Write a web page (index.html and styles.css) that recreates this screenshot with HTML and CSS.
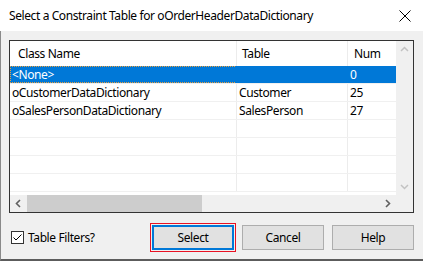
FILE: index.html
```html
<!DOCTYPE html>
<html lang="en">
<head>
  <meta charset="UTF-8">
  <title>Select a Constraint Table</title>
  <link rel="stylesheet" href="styles.css">
</head>
<body>
  <div class="dialog">
    <div class="titlebar">
      <span class="title">Select a Constraint Table for oOrderHeaderDataDictionary</span>
      <svg class="close" width="12" height="12" viewBox="0 0 12 12">
        <path d="M0.5 0.5 L11.5 11.5 M11.5 0.5 L0.5 11.5" stroke="#000" stroke-width="1" fill="none"/>
      </svg>
    </div>

    <div class="client">
      <div class="listview">
        <div class="list-main">
          <div class="list-body">
            <div class="row header">
              <div class="cell col-name">Class Name</div>
              <div class="cell col-table">Table</div>
              <div class="cell col-num">Num</div>
            </div>
            <div class="row selected">
              <div class="cell col-name"><span class="focus">&lt;None&gt;</span></div>
              <div class="cell col-table"></div>
              <div class="cell col-num">0</div>
            </div>
            <div class="row">
              <div class="cell col-name">oCustomerDataDictionary</div>
              <div class="cell col-table">Customer</div>
              <div class="cell col-num">25</div>
            </div>
            <div class="row">
              <div class="cell col-name">oSalesPersonDataDictionary</div>
              <div class="cell col-table">SalesPerson</div>
              <div class="cell col-num">27</div>
            </div>
            <div class="row empty"><div class="cell col-name"></div><div class="cell col-table"></div><div class="cell col-num"></div></div>
            <div class="row empty"><div class="cell col-name"></div><div class="cell col-table"></div><div class="cell col-num"></div></div>
            <div class="row empty"><div class="cell col-name"></div><div class="cell col-table"></div><div class="cell col-num"></div></div>
            <div class="row empty"><div class="cell col-name"></div><div class="cell col-table"></div><div class="cell col-num"></div></div>
          </div>
          <div class="vscroll">
            <svg width="17" height="17" viewBox="0 0 17 17"><path d="M5 10 L8.5 6.5 L12 10" stroke="#c2c2c2" stroke-width="1.5" fill="none"/></svg>
            <svg width="17" height="17" viewBox="0 0 17 17"><path d="M5 7 L8.5 10.5 L12 7" stroke="#c2c2c2" stroke-width="1.5" fill="none"/></svg>
          </div>
        </div>
        <div class="hscroll">
          <svg width="17" height="17" viewBox="0 0 17 17"><path d="M10 5 L6.5 8.5 L10 12" stroke="#606060" stroke-width="1.6" fill="none"/></svg>
          <div class="track"><div class="thumb"></div></div>
          <svg width="17" height="17" viewBox="0 0 17 17"><path d="M7 5 L10.5 8.5 L7 12" stroke="#606060" stroke-width="1.6" fill="none"/></svg>
          <div class="corner"></div>
        </div>
      </div>

      <div class="footer">
        <label class="check">
          <span class="box">
            <svg width="11" height="11" viewBox="0 0 11 11"><path d="M1.5 5.5 L4 8 L9.5 2.5" stroke="#000" stroke-width="1" fill="none"/></svg>
          </span>
          Table Filters?
        </label>
        <div class="buttons">
          <div class="focus-ring"><button class="btn default">Select</button></div>
          <button class="btn">Cancel</button>
          <button class="btn">Help</button>
        </div>
      </div>
    </div>
  </div>
</body>
</html>
```

FILE: styles.css
```css
* {
  margin: 0;
  padding: 0;
  box-sizing: border-box;
}

body {
  width: 423px;
  height: 261px;
  overflow: hidden;
  font-family: "Noto Sans", "Liberation Sans", sans-serif;
  font-size: 12px;
  letter-spacing: -0.4px;
  color: #000;
  background: #f0f0f0;
}

.dialog {
  width: 424px;
  height: 261px;
  display: flex;
  flex-direction: column;
}

.titlebar {
  height: 31px;
  background: #ffffff;
  display: flex;
  align-items: center;
  justify-content: space-between;
  padding: 0 13px 0 9px;
}

.title {
  font-size: 12px;
}

.client {
  flex: 1;
  background: #f0f0f0;
  border-left: 1px solid #8a8a8a;
  border-bottom: 2px solid #5c5c5c;
  padding: 9px 10px 0 8px;
  display: flex;
  flex-direction: column;
}

.listview {
  width: 405px;
  height: 173px;
  border: 1px solid #333;
  background: #fff;
  display: flex;
  flex-direction: column;
}

.list-main {
  flex: 1;
  display: flex;
  min-height: 0;
}

.list-body {
  flex: 1;
  overflow: hidden;
}

.row {
  display: flex;
  height: 18px;
  border-bottom: 1px solid #f0f0f0;
}

.row.header {
  height: 25px;
  border-bottom: none;
}

.cell {
  height: 100%;
  line-height: 17px;
  white-space: nowrap;
  overflow: hidden;
  padding-left: 2px;
}

.header .cell {
  line-height: 25px;
  padding-left: 8px;
}

.col-name {
  width: 227px;
  border-right: 1px solid #ececec;
}

.col-table {
  width: 111px;
  border-right: 1px solid #ececec;
}

.col-num {
  width: 48px;
}

.header .col-table {
  padding-left: 5px;
}

.header .col-num {
  padding-left: 6px;
}

.selected {
  background: #0078d7;
  color: #fff;
  width: 386px;
}

.selected .cell {
  border-right-color: #0078d7;
}

.selected .col-name {
  padding-left: 0;
}

.selected .focus {
  display: block;
  width: 227px;
  height: 17px;
  border: 1px dotted #e8a040;
  line-height: 15px;
  padding-left: 1px;
}

.vscroll {
  width: 17px;
  background: #f0f0f0;
  display: flex;
  flex-direction: column;
  justify-content: space-between;
}

.hscroll {
  height: 17px;
  display: flex;
  background: #f0f0f0;
}

.hscroll .track {
  width: 352px;
}

.hscroll .thumb {
  width: 175px;
  height: 17px;
  background: #cdcdcd;
}

.hscroll .corner {
  width: 17px;
  background: #f0f0f0;
}

.footer {
  flex: 1;
  display: flex;
  align-items: center;
  justify-content: space-between;
  padding-top: 3px;
}

.check {
  display: flex;
  align-items: center;
  gap: 4px;
  margin-left: 2px;
}

.box {
  width: 13px;
  height: 13px;
  border: 1px solid #333;
  background: #fff;
  display: flex;
  align-items: center;
  justify-content: center;
}

.buttons {
  display: flex;
  align-items: center;
  gap: 8px;
}

.focus-ring {
  border: 1px solid #e81123;
  padding: 1px;
  margin-right: -2px;
}

.btn {
  width: 82px;
  height: 25px;
  border: 1px solid #adadad;
  background: #e1e1e1;
  font-family: inherit;
  font-size: 12px;
  letter-spacing: inherit;
  color: #000;
}

.btn.default {
  border: 2px solid #0078d7;
  display: block;
}
```
